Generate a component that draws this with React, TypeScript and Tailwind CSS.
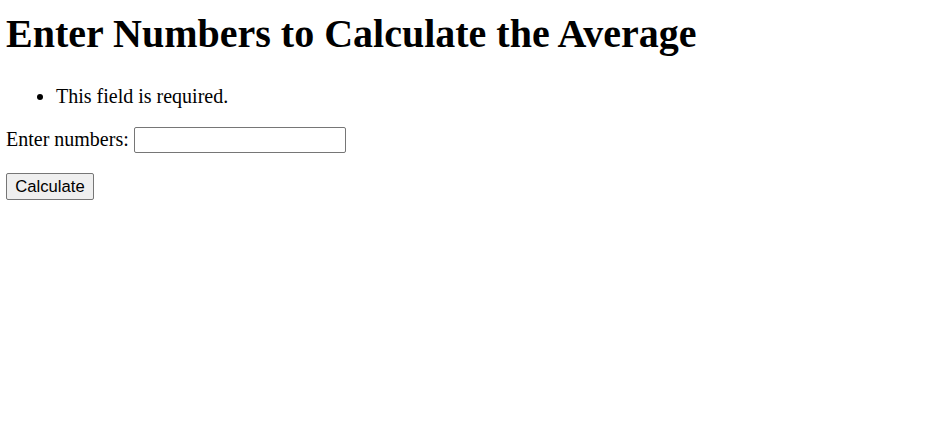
import React from "react";

export default function App() {
  return (
    <div className="min-h-[426px] bg-white pl-[6px] pt-[11px] text-black font-['Liberation_Serif','Times_New_Roman',serif]">
      <h1 className="text-[40px] font-bold leading-[46px]">Enter Numbers to Calculate the Average</h1>
      <ul className="mt-[28px] list-disc pl-[50px] text-[20px] leading-[23px]">
        <li>This field is required.</li>
      </ul>
      <form onSubmit={(e) => e.preventDefault()}>
        <div className="mt-[19px] flex items-start text-[20px] leading-[23px]">
          <label htmlFor="nums" className="mt-[1px]">Enter numbers:</label>
          <input
            id="nums"
            type="text"
            className="ml-[5px] h-[26px] w-[212px] rounded-[2px] border border-[#767676] bg-white px-[2px] text-[16.67px] font-['Liberation_Sans',Arial,sans-serif] outline-none"
          />
        </div>
        <button
          type="submit"
          className="mt-[20px] flex h-[27px] w-[88px] items-center justify-center rounded-[2px] border border-[#767676] bg-[#efefef] text-[16.67px] leading-[20px] font-['Liberation_Sans',Arial,sans-serif] text-black"
        >
          Calculate
        </button>
      </form>
    </div>
  );
}
